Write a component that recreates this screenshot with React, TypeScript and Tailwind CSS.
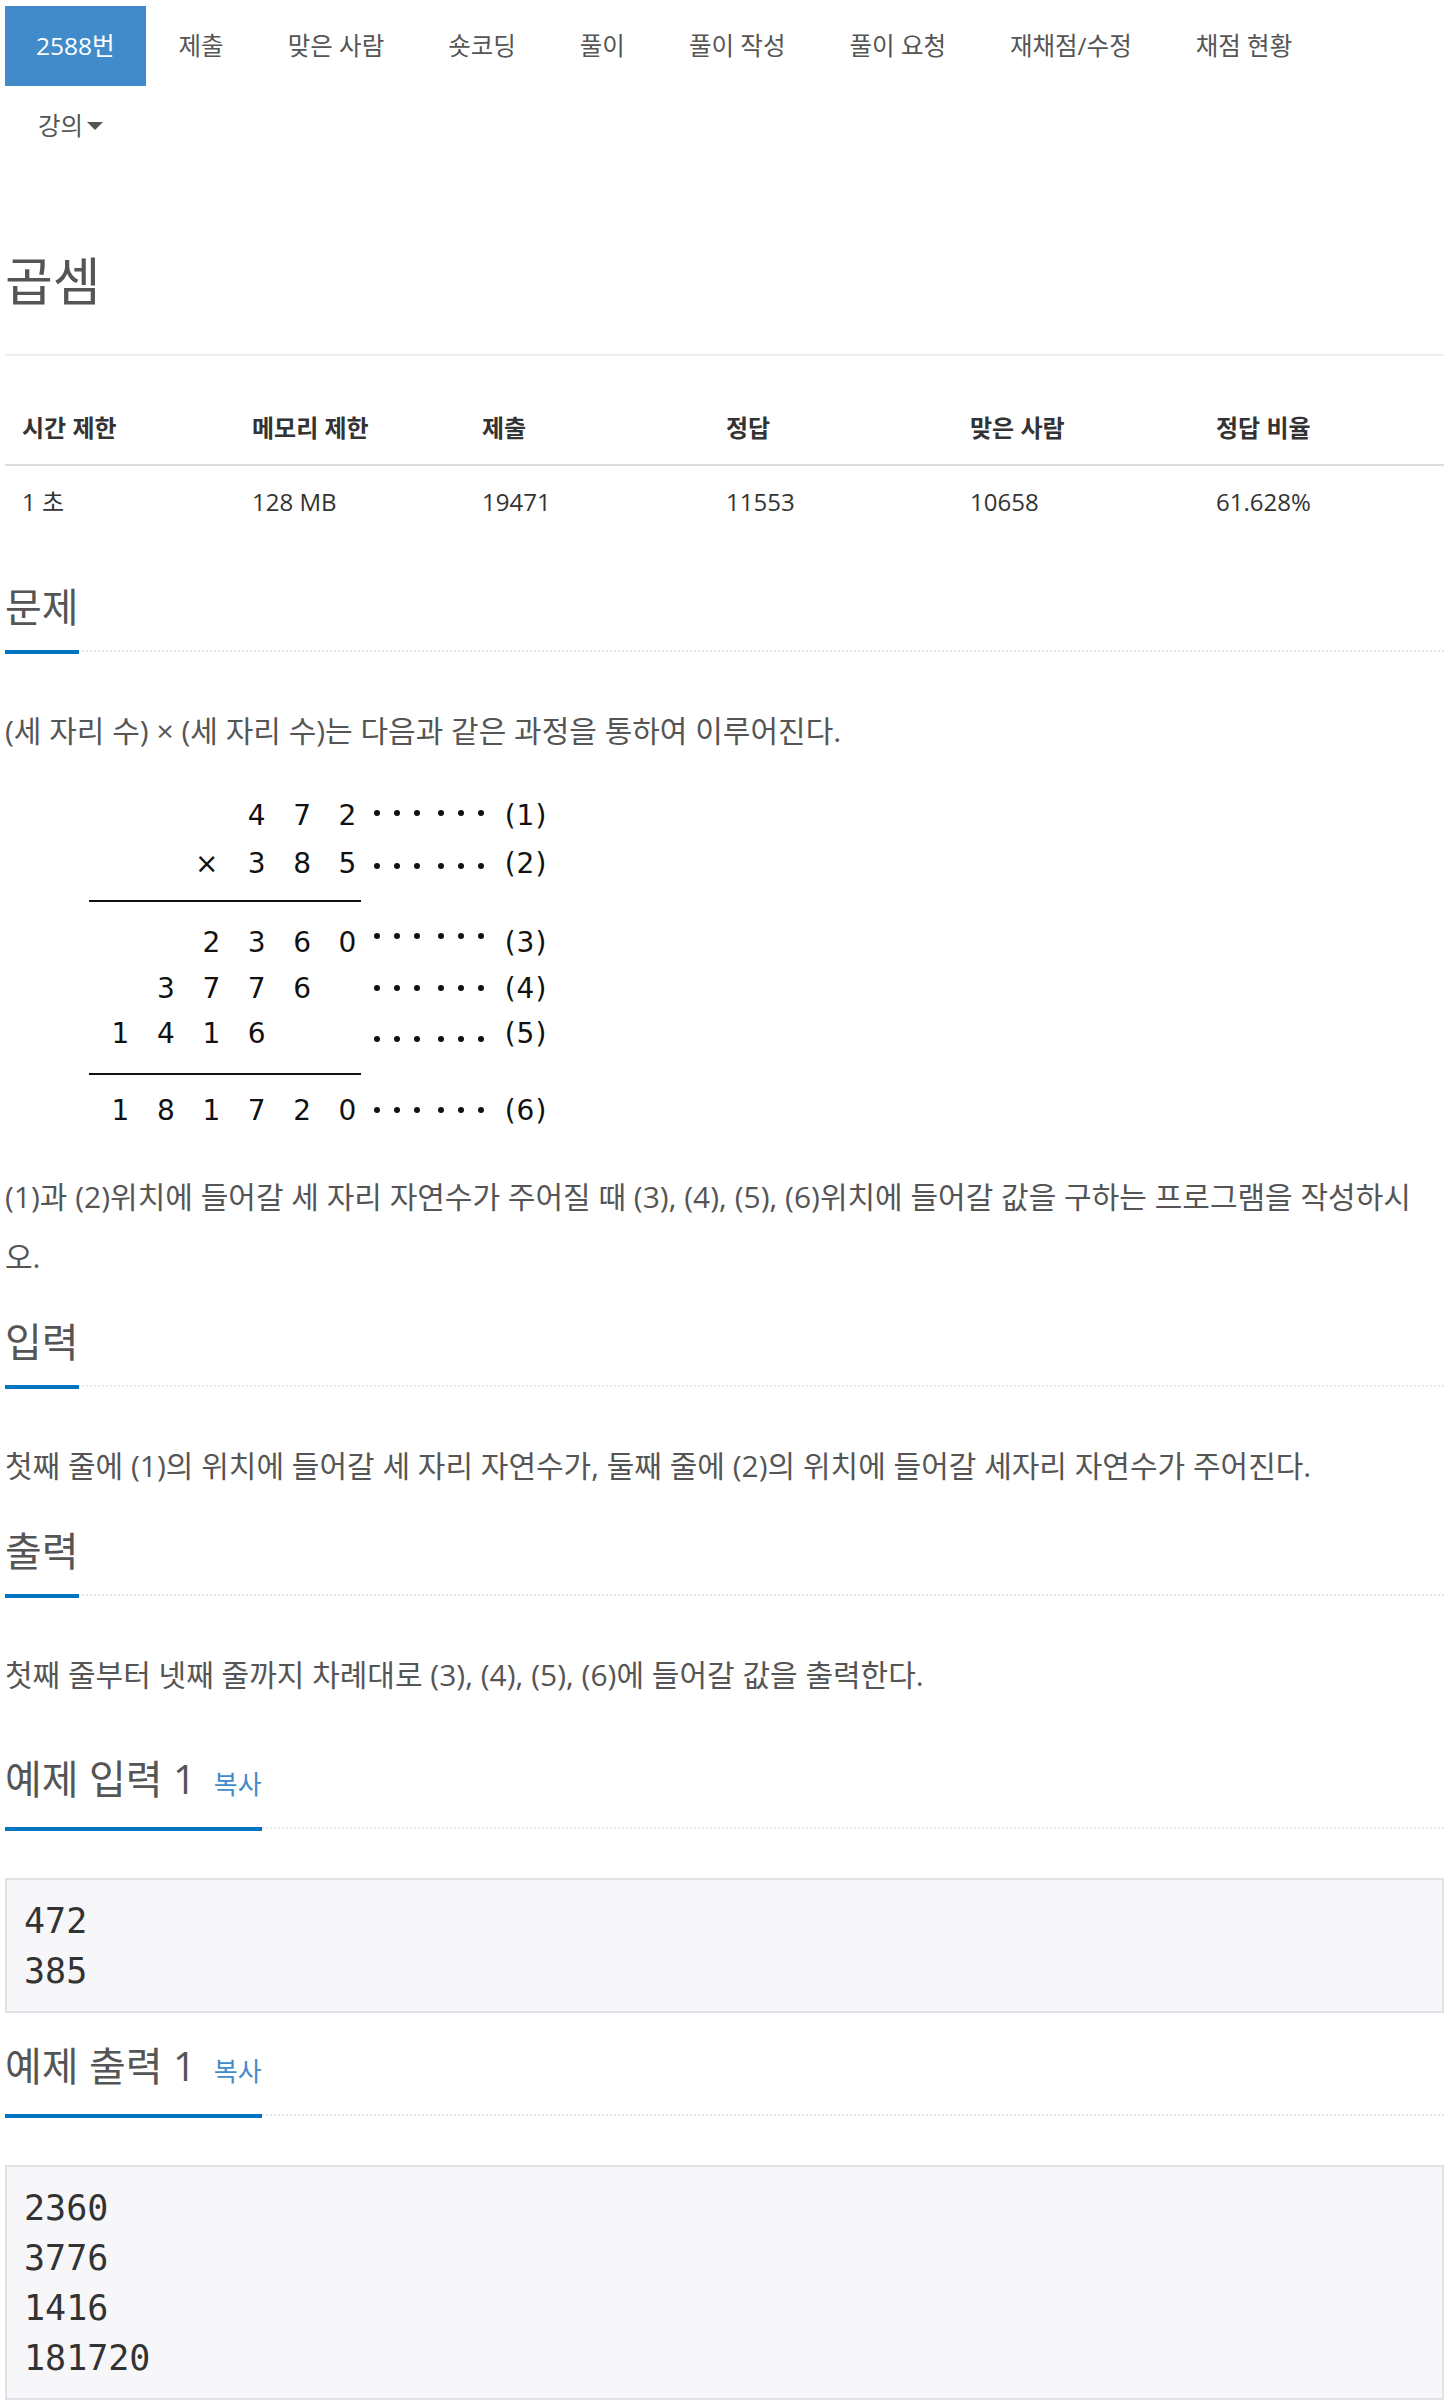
import React from "react";

const tabs = [
  "2588번",
  "제출",
  "맞은 사람",
  "숏코딩",
  "풀이",
  "풀이 작성",
  "풀이 요청",
  "재채점/수정",
  "채점 현황",
];

const stats = [
  { label: "시간 제한", value: "1 초", w: "w-[230px]" },
  { label: "메모리 제한", value: "128 MB", w: "w-[230px]" },
  { label: "제출", value: "19471", w: "w-[244px]" },
  { label: "정답", value: "11553", w: "w-[244px]" },
  { label: "맞은 사람", value: "10658", w: "w-[246px]" },
  { label: "정답 비율", value: "61.628%", w: "" },
];

const Headline = ({
  children,
  copy,
}: {
  children: React.ReactNode;
  copy?: boolean;
}) => (
  <div className="flex border-b-2 border-dotted border-[#e4e9f0] mb-[49px]">
    <h2 className="text-[40px] leading-[48px] pb-[19px] border-b-4 border-[#0076c0] mb-[-4px] text-[#555] font-normal">
      {children}
      {copy && (
        <span className="ml-[18px] text-[26px] text-[#428bca]">복사</span>
      )}
    </h2>
  </div>
);

// 곱셈 과정 그림 (원본은 이미지)
const cols = [115.5, 160.9, 206.3, 251.7, 297.1, 342.5];
const dotsX = [372, 392, 412, 436, 456, 476];
const rows: { y: number; dotY: number; digits: [number, string][]; label: string }[] = [
  { y: 54, dotY: 52, digits: [[3, "4"], [4, "7"], [5, "2"]], label: "(1)" },
  { y: 102, dotY: 105, digits: [[3, "3"], [4, "8"], [5, "5"]], label: "(2)" },
  { y: 181, dotY: 175, digits: [[2, "2"], [3, "3"], [4, "6"], [5, "0"]], label: "(3)" },
  { y: 227, dotY: 227, digits: [[1, "3"], [2, "7"], [3, "7"], [4, "6"]], label: "(4)" },
  { y: 272, dotY: 278, digits: [[0, "1"], [1, "4"], [2, "1"], [3, "6"]], label: "(5)" },
  {
    y: 349,
    dotY: 349,
    digits: [[0, "1"], [1, "8"], [2, "1"], [3, "7"], [4, "2"], [5, "0"]],
    label: "(6)",
  },
];

const Figure = () => (
  <div className="h-[406px]">
    <svg width="560" height="406" viewBox="0 0 560 406" className="block">
      <g
        fontFamily="'DejaVu Sans', sans-serif"
        fontSize="28"
        fill="#111"
        textAnchor="middle"
        dominantBaseline="central"
      >
        {rows.map((r) => (
          <g key={r.label}>
            {r.digits.map(([c, d]) => (
              <text key={c} x={cols[c]} y={r.y}>
                {d}
              </text>
            ))}
            {dotsX.map((x) => (
              <circle key={x} cx={x} cy={r.dotY} r="3" fill="#111" />
            ))}
            <text x={521} y={r.y} letterSpacing="1">
              {r.label}
            </text>
          </g>
        ))}
        <text x={201.7} y={102}>
          ×
        </text>
      </g>
      <line x1="84" y1="140" x2="356" y2="140" stroke="#111" strokeWidth="2.2" />
      <line x1="84" y1="313" x2="356" y2="313" stroke="#111" strokeWidth="2.2" />
    </svg>
  </div>
);

const Sample = ({ lines }: { lines: string[] }) => (
  <pre className="border-2 border-[#e1e1e8] bg-[#f7f7f9] px-[17px] py-[15.5px] font-['DejaVu_Sans_Mono',monospace] text-[35px] leading-[50px] text-[#333]">
    {lines.join("\n")}
  </pre>
);

const App = () => {
  return (
    <div className="min-h-screen bg-white pl-[5px] pr-[4px] font-['Open_Sans','Noto_Sans_CJK_KR',sans-serif] text-[#555]">
      <ul className="flex flex-wrap pt-[6px]">
        {tabs.map((t, i) => (
          <li key={t} className={i > 0 ? "ml-[2px]" : ""}>
            <a
              className={`block px-[31px] py-[20px] text-[24.5px] leading-[40px] ${
                i === 0 ? "bg-[#428bca] text-white" : "text-[#555]"
              }`}
            >
              {t}
            </a>
          </li>
        ))}
        <li className="ml-[2px]">
          <a className="flex items-center px-[31px] py-[20px] text-[24.5px] leading-[40px] text-[#555]">
            강의
            <span className="ml-[4px] inline-block h-0 w-0 border-x-[8px] border-t-[8px] border-x-transparent border-t-[#555]" />
          </a>
        </li>
      </ul>

      <div className="mt-[88px] border-b-2 border-[#eee] pb-[46px]">
        <h1 className="text-[52px] leading-[54px] font-normal text-[#555]">곱셈</h1>
      </div>

      <table className="mt-[36px] w-full table-fixed text-[24px] text-[#333]">
        <thead>
          <tr>
            {stats.map((s) => (
              <th
                key={s.label}
                className={`${s.w} border-b-2 border-[#ddd] px-[17px] py-[16px] text-left font-bold leading-[40px]`}
              >
                {s.label}
              </th>
            ))}
          </tr>
        </thead>
        <tbody>
          <tr>
            {stats.map((s) => (
              <td key={s.label} className="px-[17px] py-[16px] leading-[40px]">
                {s.value}
              </td>
            ))}
          </tr>
        </tbody>
      </table>

      <section className="mt-[45px]">
        <Headline>문제</Headline>
        <div className="text-[30px] leading-[60px]">
          <p>(세 자리 수) × (세 자리 수)는 다음과 같은 과정을 통하여 이루어진다.</p>
          <Figure />
          <p>
            (1)과 (2)위치에 들어갈 세 자리 자연수가 주어질 때 (3), (4), (5), (6)위치에 들어갈 값을 구하는
            프로그램을 작성하시오.
          </p>
        </div>
      </section>

      <section className="mt-[31px]">
        <Headline>입력</Headline>
        <p className="text-[30px] leading-[60px]">
          첫째 줄에 (1)의 위치에 들어갈 세 자리 자연수가, 둘째 줄에 (2)의 위치에 들어갈 세자리 자연수가 주어진다.
        </p>
      </section>

      <section className="mt-[31px]">
        <Headline>출력</Headline>
        <p className="text-[30px] leading-[60px]">
          첫째 줄부터 넷째 줄까지 차례대로 (3), (4), (5), (6)에 들어갈 값을 출력한다.
        </p>
      </section>

      <section className="mt-[50px]">
        <Headline copy>예제 입력 1</Headline>
        <Sample lines={["472", "385"]} />
      </section>

      <section className="mt-[29px] pb-[10px]">
        <Headline copy>예제 출력 1</Headline>
        <Sample lines={["2360", "3776", "1416", "181720"]} />
      </section>
    </div>
  );
};

export default App;
